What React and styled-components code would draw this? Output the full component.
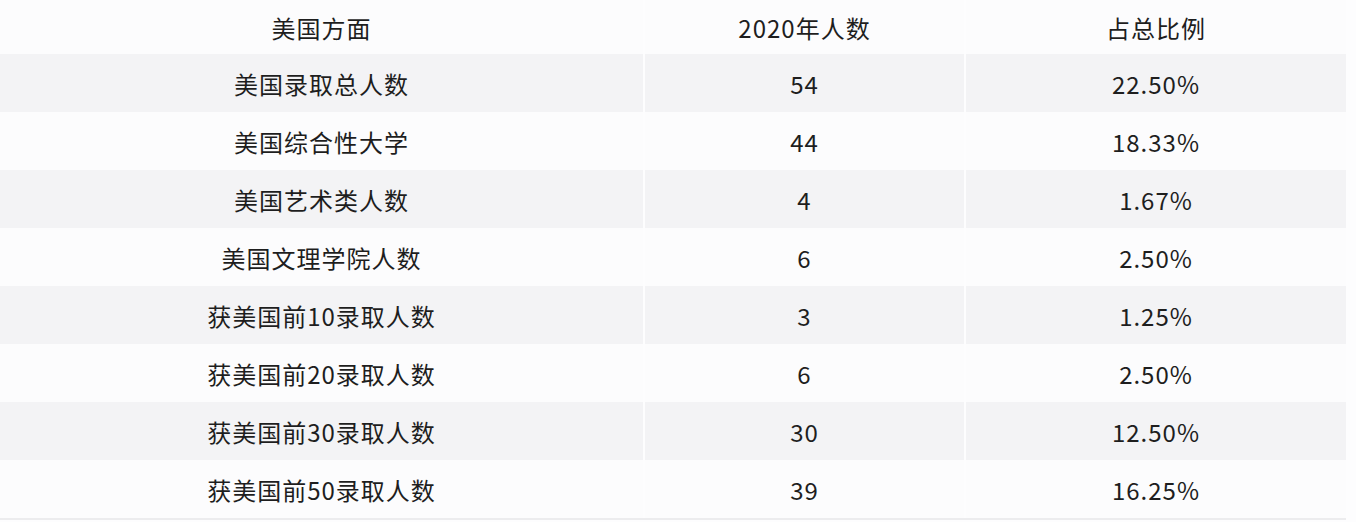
import React from 'react'
import styled, { createGlobalStyle } from 'styled-components'

const GlobalStyle = createGlobalStyle`
  body {
    margin: 0;
    background: #fdfdfe;
    font-family: "Noto Sans CJK SC", "Noto Sans", sans-serif;
    color: #1e1e1e;
  }
`

const Table = styled.div`
  width: 1346px;
  display: grid;
  grid-template-columns: 643px 319px 380px;
  column-gap: 2px;
  border-bottom: 2px solid #ececee;
`

const Cell = styled.div`
  height: ${p => (p.head ? 54 : 58)}px;
  display: flex;
  align-items: center;
  justify-content: center;
  font-size: 24px;
  font-weight: 400;
  letter-spacing: 1px;
  background: ${p => (p.shaded ? '#f3f3f5' : '#fcfcfd')};
`

const rows = [
  ['美国录取总人数', '54', '22.50%'],
  ['美国综合性大学', '44', '18.33%'],
  ['美国艺术类人数', '4', '1.67%'],
  ['美国文理学院人数', '6', '2.50%'],
  ['获美国前10录取人数', '3', '1.25%'],
  ['获美国前20录取人数', '6', '2.50%'],
  ['获美国前30录取人数', '30', '12.50%'],
  ['获美国前50录取人数', '39', '16.25%'],
]

const App = () => {
  return (
    <>
      <GlobalStyle />
      <Table>
        <Cell head>美国方面</Cell>
        <Cell head>2020年人数</Cell>
        <Cell head>占总比例</Cell>
        {rows.map((r, i) =>
          r.map((v, j) => (
            <Cell key={i + '-' + j} shaded={i % 2 === 0}>{v}</Cell>
          ))
        )}
      </Table>
    </>
  )
}

export default App
